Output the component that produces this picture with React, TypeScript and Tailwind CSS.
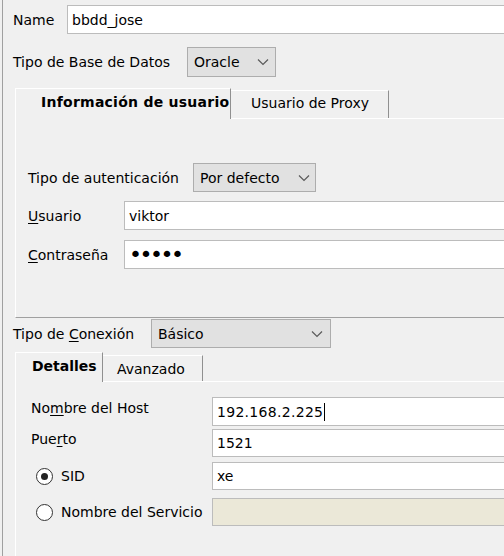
import React from "react";

const Chevron = () => (
  <svg width="12" height="8" viewBox="0 0 12 8" className="shrink-0">
    <polyline points="1,1.5 6,6.5 11,1.5" fill="none" stroke="#5a5a5a" strokeWidth="1.2" />
  </svg>
);

const Input = ({ className = "", children }: { className?: string; children?: React.ReactNode }) => (
  <div className={"flex-1 flex items-center bg-white border-y border-l border-[#bcbcbc] pl-[4px] whitespace-nowrap " + className}>
    {children}
  </div>
);

export default function App() {
  return (
    <div
      className="w-[504px] h-[556px] bg-[#f0f0f0] overflow-hidden text-[14px] leading-[18px] text-black"
      style={{ fontFamily: '"DejaVu Sans", sans-serif' }}
    >
      <div className="ml-[2px] h-full border-l border-[#a0a0a0] pl-[10px]">
        {/* Name */}
        <div className="pt-[5px] flex items-center h-[34px]">
          <div className="w-[54px] shrink-0">Name</div>
          <Input className="h-[29px]">bbdd_jose</Input>
        </div>
        {/* Tipo de Base de Datos */}
        <div className="mt-[13px] flex items-center h-[30px]">
          <div className="w-[174px] shrink-0 whitespace-nowrap">Tipo de Base de Datos</div>
          <div className="w-[89px] h-[30px] bg-[#e1e1e1] border border-[#adadad] flex items-center justify-between pl-[6px] pr-[6px]">
            <span>Oracle</span>
            <Chevron />
          </div>
        </div>

        {/* Tab panel 1 */}
        <div className="mt-[11px] ml-[2px]">
          <div className="flex items-end h-[30px] relative z-10">
            <div className="w-[216px] h-[31px] -mb-px border-t border-l border-white border-r border-r-[#909090] bg-[#f0f0f0] pl-[25px] pt-[4px] font-bold tracking-[0.25px] whitespace-nowrap">
              Información de usuario
            </div>
            <div className="w-[158px] h-[28px] border-t border-white border-r border-r-[#909090] pl-[20px] pt-[3px] whitespace-nowrap">
              Usuario de Proxy
            </div>
            <div className="flex-1" />
          </div>
          <div className="h-[200px] border-t border-l border-white border-b border-b-[#a0a0a0] pl-[12px] pt-[44px]">
            <div className="flex items-center h-[29px]">
              <div className="w-[165px] shrink-0 whitespace-nowrap">Tipo de autenticación</div>
              <div className="w-[123px] h-[29px] bg-[#e1e1e1] border border-[#adadad] flex items-center justify-between pl-[6px] pr-[5px]">
                <span className="whitespace-nowrap">Por defecto</span>
                <Chevron />
              </div>
            </div>
            <div className="mt-[9px] flex items-center h-[29px]">
              <div className="w-[96px] shrink-0">
                <span className="underline underline-offset-2">U</span>suario
              </div>
              <Input className="h-[29px]">viktor</Input>
            </div>
            <div className="mt-[10px] flex items-center h-[29px]">
              <div className="w-[96px] shrink-0">
                <span className="underline underline-offset-2">C</span>ontraseña
              </div>
              <Input className="h-[29px]">
                <span className="text-[22px] leading-[18px] tracking-[-2.5px] text-black">•••••</span>
              </Input>
            </div>
          </div>
        </div>

        {/* Tipo de Conexión */}
        <div className="mt-px flex items-center h-[29px]">
          <div className="w-[138px] shrink-0 whitespace-nowrap">
            Tipo de <span className="underline underline-offset-2">C</span>onexión
          </div>
          <div className="w-[180px] h-[29px] bg-[#e1e1e1] border border-[#adadad] flex items-center justify-between pl-[6px] pr-[7px]">
            <span>Básico</span>
            <Chevron />
          </div>
        </div>

        {/* Tab panel 2 */}
        <div className="mt-[4px] ml-[2px]">
          <div className="flex items-end h-[29px] relative z-10">
            <div className="w-[88px] h-[30px] -mb-px border-t border-l border-white border-r border-r-[#909090] bg-[#f0f0f0] pl-[16px] pt-[4px] font-bold whitespace-nowrap">
              Detalles
            </div>
            <div className="w-[100px] h-[26px] border-t border-white border-r border-r-[#909090] pl-[14px] pt-[4px] whitespace-nowrap">
              Avanzado
            </div>
            <div className="flex-1" />
          </div>
          <div className="h-[200px] border-t border-l border-white pl-[15px] pt-[15px]">
            <div className="flex items-center h-[29px]">
              <div className="w-[181px] shrink-0 pb-[8px] whitespace-nowrap">
                No<span className="underline underline-offset-2">m</span>bre del Host
              </div>
              <Input className="h-[29px]">
                <span className="tracking-[0.3px]">192.168.2.225</span>
                <span className="inline-block w-px h-[18px] bg-black ml-px" />
              </Input>
            </div>
            <div className="mt-[3px] flex items-center h-[28px]">
              <div className="w-[181px] shrink-0 pb-[8px]">
                Pue<span className="underline underline-offset-2">r</span>to
              </div>
              <Input className="h-[28px]">1521</Input>
            </div>
            <div className="mt-[5px] flex items-center h-[28px]">
              <div className="w-[181px] shrink-0 flex items-center pl-[5px]">
                <div className="w-[17px] h-[17px] rounded-full border border-[#333] bg-white flex items-center justify-center">
                  <div className="w-[7px] h-[7px] rounded-full bg-[#222]" />
                </div>
                <span className="ml-[8px]">SID</span>
              </div>
              <Input className="h-[28px]">xe</Input>
            </div>
            <div className="mt-[8px] flex items-center h-[28px]">
              <div className="w-[181px] shrink-0 flex items-center pl-[5px]">
                <div className="w-[17px] h-[17px] rounded-full border border-[#333] bg-white" />
                <span className="ml-[8px] whitespace-nowrap">Nombre del Servicio</span>
              </div>
              <Input className="h-[28px] !bg-[#ebe8d8]"></Input>
            </div>
          </div>
        </div>
      </div>
    </div>
  );
}
